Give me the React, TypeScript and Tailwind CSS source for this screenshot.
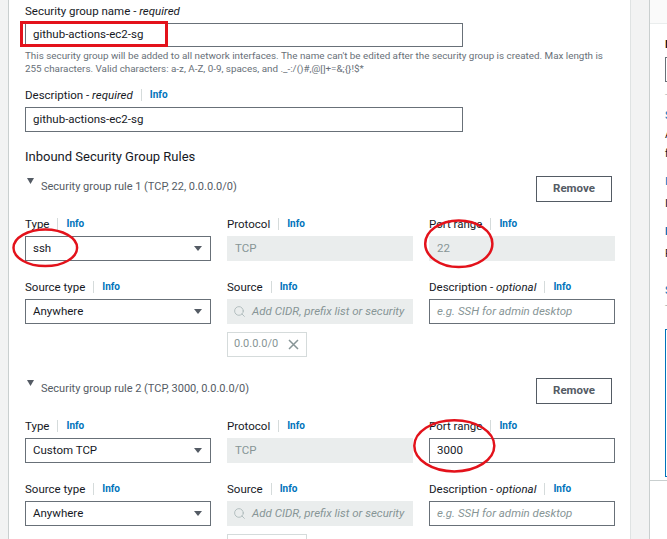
import { Search } from 'lucide-react';

const RED = '#e3121b';

function Label({ text, note, info = true }: { text: string; note?: string; info?: boolean }) {
  return (
    <div className="flex h-[14px] items-center whitespace-nowrap text-[11.5px] leading-[14px] text-[#16191f]">
      <span>
        {text}
        {note && (
          <>
            {' - '}
            <i>{note}</i>
          </>
        )}
      </span>
      {info && (
        <>
          <span className="ml-[8px] h-[12px] w-px bg-[#d5dbdb]" />
          <span className="ml-[8px] text-[10px] font-bold text-[#0073bb]">Info</span>
        </>
      )}
    </div>
  );
}

function Caret() {
  return (
    <svg width="8" height="5" viewBox="0 0 8 5">
      <path d="M0 0h8L4 5z" fill="#545b64" />
    </svg>
  );
}

function SelectBox({ value }: { value: string }) {
  return (
    <div className="mt-[5px] flex h-[25px] items-center justify-between border border-[#687078] bg-white pl-[7px] pr-[8px] text-[11.5px] text-[#16191f]">
      <span>{value}</span>
      <Caret />
    </div>
  );
}

function DisabledBox({ value }: { value: string }) {
  return (
    <div className="mt-[5px] flex h-[25px] items-center border border-[#eaeded] bg-[#eaeded] pl-[7px] text-[11.5px] text-[#879596]">
      {value}
    </div>
  );
}

function TextBox({ value, placeholder }: { value?: string; placeholder?: string }) {
  return (
    <div className="mt-[5px] flex h-[25px] items-center overflow-hidden whitespace-nowrap border border-[#687078] bg-white pl-[7px] text-[11.5px]">
      {value ? (
        <span className="text-[#16191f]">{value}</span>
      ) : (
        <i className="text-[#879596]">{placeholder}</i>
      )}
    </div>
  );
}

function SourceSearch() {
  return (
    <div className="mt-[5px] flex h-[25px] items-center overflow-hidden whitespace-nowrap border border-[#eaeded] bg-[#eaeded] pl-[5px] text-[11.5px] text-[#879596]">
      <Search size={13} strokeWidth={1.6} className="shrink-0 text-[#aab7b8]" />
      <i className="ml-[6px]">Add CIDR, prefix list or security</i>
    </div>
  );
}

function Rule({
  summary,
  type,
  port,
  portEditable,
  top,
}: {
  summary: string;
  type: string;
  port: string;
  portEditable?: boolean;
  top: string;
}) {
  return (
    <div className={`${top} w-[590px]`}>
      <div className="flex h-[26px] items-start justify-between">
        <div className="flex items-start">
          <svg width="7" height="6" viewBox="0 0 7 6" className="ml-[2px] mt-[2px]">
            <path d="M0 0h7L3.5 6z" fill="#545b64" />
          </svg>
          <span className="ml-[7px] mt-[4px] text-[11px] leading-[14px] text-[#545b64]">{summary}</span>
        </div>
        <button className="mr-[3px] h-[26px] w-[76px] border border-[#545b64] bg-white text-[11.5px] font-bold text-[#545b64]">
          Remove
        </button>
      </div>

      <div className="mt-[15px] grid grid-cols-[186px_186px_186px] gap-x-[16px]">
        <div>
          <Label text="Type" />
          <SelectBox value={type} />
        </div>
        <div>
          <Label text="Protocol" />
          <DisabledBox value="TCP" />
        </div>
        <div>
          <Label text="Port range" />
          {portEditable ? <TextBox value={port} /> : <DisabledBox value={port} />}
        </div>
      </div>

      <div className="mt-[19px] grid grid-cols-[186px_186px_186px] gap-x-[16px]">
        <div>
          <Label text="Source type" />
          <SelectBox value="Anywhere" />
        </div>
        <div>
          <Label text="Source" />
          <SourceSearch />
          <div className="mt-[8px] flex h-[25px] w-[80px] items-center justify-between border border-[#d5dbdb] bg-white pl-[6px] pr-[7px] text-[11px] text-[#879596]">
            <span>0.0.0.0/0</span>
            <svg width="11" height="11" viewBox="0 0 11 11">
              <path d="M1 1l9 9M10 1l-9 9" stroke="#879596" strokeWidth="1.5" />
            </svg>
          </div>
        </div>
        <div>
          <Label text="Description" note="optional" />
          <TextBox placeholder="e.g. SSH for admin desktop" />
        </div>
      </div>
    </div>
  );
}

function SidePanel() {
  return (
    <div className="h-full w-[18px] overflow-hidden border-l border-[#c9cfcf] bg-white">
      <div className="h-[24px] border-b border-[#eaeded] bg-[#fafafa]" />
      <div className="w-[260px] pl-[15px] text-[11px] leading-[14px] text-[#16191f]">
        <div className="mt-[14px] font-bold">Name</div>
        <div className="mt-[5px] h-[25px] border border-[#687078]" />
        <div className="mt-[5px] text-[9.5px] text-[#aab7b8]">-</div>
        <div className="mt-[8px] text-[#0073bb]">Security groups</div>
        <div className="mt-[5px]">A security group acts as a</div>
        <div className="mt-[5px]">firewall for your instance</div>
        <div className="mt-[14px] text-[#0073bb]">Inbound rules</div>
        <div className="mt-[8px]">Inbound rules control</div>
        <div className="mt-[14px] font-bold text-[#0073bb]">Learn more</div>
        <div className="mt-[8px]">Rules are evaluated</div>
        <div className="mt-[23px] text-[#0073bb]">Source</div>
        <div className="mt-[1px] text-[#aab7b8]">-</div>
        <div className="mt-[16px] h-[148px] border border-[#0073bb]" />
      </div>
      <div className="mt-[3px] border-b border-[#c9cfcf]" />
    </div>
  );
}

export default function App() {
  return (
    <div className="relative flex h-[539px] w-[667px] overflow-hidden bg-[#f2f3f3] font-[Roboto,sans-serif]">
      <div className="w-[8px] shrink-0" />

      <div className="w-[623px] shrink-0 border-x border-l-[#c9cfcf] border-r-[#dfe3e3] bg-white pl-[16px] pt-[4px]">
        <Label text="Security group name" note="required" info={false} />
        <div className="mt-[5px] flex h-[24px] w-[438px] items-center border border-[#687078] pl-[7px] text-[11.5px] text-[#16191f]">
          github-actions-ec2-sg
        </div>
        <p className="mt-[2px] whitespace-nowrap text-[9.85px] leading-[13px] text-[#687078]">
          This security group will be added to all network interfaces. The name can't be edited after the security group is created. Max length is
          <br />
          255 characters. Valid characters: a-z, A-Z, 0-9, spaces, and ._-:/()#,@[]+=&amp;;{'{}'}!$*
        </p>

        <div className="mt-[13px]">
          <Label text="Description" note="required" />
        </div>
        <div className="mt-[5px] flex h-[25px] w-[438px] items-center border border-[#687078] pl-[7px] text-[11.5px] text-[#16191f]">
          github-actions-ec2-sg
        </div>

        <h2 className="mt-[17px] text-[13px] leading-[16px] text-[#16191f]">Inbound Security Group Rules</h2>

        <Rule top="mt-[11px]" summary="Security group rule 1 (TCP, 22, 0.0.0.0/0)" type="ssh" port="22" />
        <Rule
          top="mt-[21px]"
          summary="Security group rule 2 (TCP, 3000, 0.0.0.0/0)"
          type="Custom TCP"
          port="3000"
          portEditable
        />
      </div>

      <div className="w-[18px] shrink-0" />
      <SidePanel />

      {/* red annotations drawn over the screenshot */}
      <svg className="pointer-events-none absolute inset-0" width="667" height="539" viewBox="0 0 667 539">
        <rect x="21.5" y="22.5" width="145" height="23" fill="none" stroke={RED} strokeWidth="3" />
        <ellipse cx="45.3" cy="247.8" rx="31.8" ry="18.3" fill="none" stroke={RED} strokeWidth="2.5" />
        <ellipse cx="458.8" cy="243.8" rx="33.6" ry="23.3" fill="none" stroke={RED} strokeWidth="2.5" />
        <ellipse cx="454.3" cy="445.8" rx="40" ry="25.6" fill="none" stroke={RED} strokeWidth="2.5" />
      </svg>
    </div>
  );
}
